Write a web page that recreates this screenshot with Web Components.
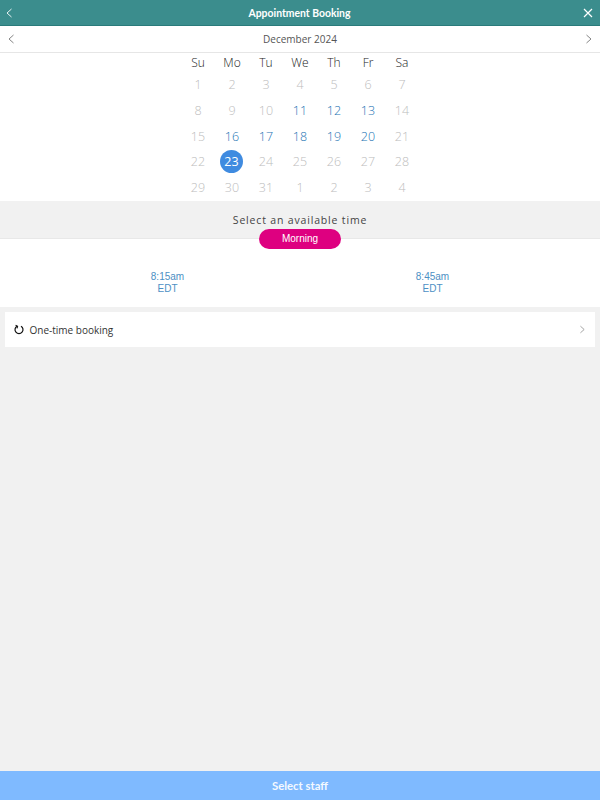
<!DOCTYPE html>
<html lang="en">
<head>
  <meta charset="UTF-8" />
  <title>Appointment Booking</title>
  <style>
    body {
      margin: 0;
      font-family: "Open Sans", "Noto Sans", sans-serif;
      background: #f1f1f1;
      overflow: hidden;
    }
  </style>
</head>
<body>
  <booking-app>
    <title-bar>Appointment Booking</title-bar>
    <month-bar>December 2024</month-bar>
    <month-calendar></month-calendar>
    <time-picker></time-picker>
    <booking-row>One-time booking</booking-row>
    <action-bar>Select staff</action-bar>
  </booking-app>
  <script>
    const chevron = (dir, color, w, h) => `
      <svg width="${w}" height="${h}" viewBox="0 0 6 10" fill="none" stroke="${color}" stroke-width="0.9">
        <path d="${dir === 'left' ? 'M5.5 1 1 5l4.5 4' : 'M.5 1 5 5 .5 9'}" />
      </svg>`;

    class BookingApp extends HTMLElement {
      constructor() {
        super();
        this.attachShadow({ mode: 'open' }).innerHTML = `
          <style>
            :host {
              display: flex;
              flex-direction: column;
              width: 600px;
              height: 800px;
            }
            ::slotted(action-bar) {
              margin-top: auto;
            }
          </style>
          <slot></slot>
        `;
      }
    }
    customElements.define('booking-app', BookingApp);

    class TitleBar extends HTMLElement {
      constructor() {
        super();
        this.attachShadow({ mode: 'open' }).innerHTML = `
          <style>
            :host {
              box-sizing: border-box;
              display: grid;
              grid-template-columns: 1fr auto 1fr;
              align-items: center;
              height: 26px;
              padding: 0 7px 0 6px;
              background: #3b8d8d;
              border-bottom: 1px solid #2a7b7b;
              color: #fff;
              font: 700 10.4px Lato, sans-serif;
            }
            svg { display: block; }
            .close { justify-self: end; }
          </style>
          ${chevron('left', '#fff', 6, 10)}
          <slot></slot>
          <svg class="close" width="10" height="10" viewBox="0 0 10 10" fill="none" stroke="#fff" stroke-width="1.2">
            <path d="M1 1l8 8M9 1 1 9" />
          </svg>
        `;
      }
    }
    customElements.define('title-bar', TitleBar);

    class MonthBar extends HTMLElement {
      constructor() {
        super();
        this.attachShadow({ mode: 'open' }).innerHTML = `
          <style>
            :host {
              box-sizing: border-box;
              display: flex;
              align-items: center;
              justify-content: space-between;
              height: 27px;
              padding: 0 8px;
              background: #fff;
              border-bottom: 1px solid #e6e6e6;
              color: #555;
              font-size: 10px;
            }
            svg { display: block; }
          </style>
          ${chevron('left', '#777', 6, 10)}
          <slot></slot>
          ${chevron('right', '#777', 6, 10)}
        `;
      }
    }
    customElements.define('month-bar', MonthBar);

    class MonthCalendar extends HTMLElement {
      constructor() {
        super();
        const heads = ['Su', 'Mo', 'Tu', 'We', 'Th', 'Fr', 'Sa'];
        const days = [
          1, 2, 3, 4, 5, 6, 7,
          8, 9, 10, 11, 12, 13, 14,
          15, 16, 17, 18, 19, 20, 21,
          22, 23, 24, 25, 26, 27, 28,
          29, 30, 31, 1, 2, 3, 4,
        ];
        const open = new Set([11, 12, 13, 16, 17, 18, 19, 20]);
        const cells = days.map((d, i) => {
          let cls = 'day';
          if (i < 31 && open.has(d)) cls += ' open';
          if (i < 31 && d === 23) cls += ' picked';
          return `<span class="${cls}"><span>${d}</span></span>`;
        }).join('');
        this.attachShadow({ mode: 'open' }).innerHTML = `
          <style>
            :host {
              display: flex;
              justify-content: center;
              height: 148px;
              background: #fff;
            }
            .grid {
              display: grid;
              grid-template-columns: repeat(7, 34px);
              grid-template-rows: 19px repeat(5, 25.7px);
            }
            .head, .day {
              display: flex;
              align-items: center;
              justify-content: center;
              font-weight: 300;
            }
            .head {
              color: #222;
              font-size: 12px;
            }
            .day {
              color: #bdbdbd;
              font-size: 12.5px;
            }
            .open {
              color: #1d74b4;
            }
            .picked span {
              display: flex;
              align-items: center;
              justify-content: center;
              width: 23px;
              height: 23px;
              margin-right: 1px;
              border-radius: 50%;
              background: #3f8be0;
              color: #fff;
              font-weight: 400;
            }
          </style>
          <div class="grid">
            ${heads.map((h) => `<span class="head">${h}</span>`).join('')}
            ${cells}
          </div>
        `;
      }
    }
    customElements.define('month-calendar', MonthCalendar);

    class TimePicker extends HTMLElement {
      constructor() {
        super();
        this.attachShadow({ mode: 'open' }).innerHTML = `
          <style>
            :host {
              display: block;
            }
            .top {
              box-sizing: border-box;
              display: flex;
              justify-content: center;
              align-items: center;
              height: 38px;
              background: #f1f1f1;
              border-bottom: 1px solid #e8e8e8;
              color: #444;
              font-size: 10.5px;
              letter-spacing: 0.83px;
            }
            .body {
              display: flex;
              flex-direction: column;
              align-items: center;
              height: 68px;
              background: #fff;
            }
            .pill {
              position: relative;
              width: 82px;
              height: 20px;
              margin-top: -10px;
              border-radius: 10px;
              background: #de0080;
              color: #fff;
              font: 10px/20px "Liberation Sans", sans-serif;
              text-align: center;
            }
            .slots {
              display: grid;
              grid-template-columns: 265px 265px;
              width: 530px;
              margin-top: 22px;
            }
            .slot {
              color: #4d8fc4;
              font: 10px/12px "Liberation Sans", sans-serif;
              text-align: center;
            }
          </style>
          <div class="top">Select an available time</div>
          <div class="body">
            <div class="pill">Morning</div>
            <div class="slots">
              <div class="slot">8:15am<br />EDT</div>
              <div class="slot">8:45am<br />EDT</div>
            </div>
          </div>
        `;
      }
    }
    customElements.define('time-picker', TimePicker);

    class BookingRow extends HTMLElement {
      constructor() {
        super();
        this.attachShadow({ mode: 'open' }).innerHTML = `
          <style>
            :host {
              box-sizing: border-box;
              display: flex;
              align-items: center;
              gap: 5.5px;
              height: 35px;
              margin: 5px 5px 0;
              padding: 0 10px 0 9px;
              background: #fff;
              color: #333;
              font-size: 10px;
            }
            .arrow {
              margin-left: auto;
            }
            svg { display: block; }
          </style>
          <svg width="10" height="11" viewBox="0 0 10 11" fill="none" stroke="#111" stroke-width="1.2">
            <path d="M3 2.2a4 4 0 1 0 4 0" />
            <path d="M1.6 1.2 3.6 2.2 3 4.4" stroke-width="1.1" />
          </svg>
          <slot></slot>
          <span class="arrow">${chevron('right', '#888', 5, 9)}</span>
        `;
      }
    }
    customElements.define('booking-row', BookingRow);

    class ActionBar extends HTMLElement {
      constructor() {
        super();
        this.attachShadow({ mode: 'open' }).innerHTML = `
          <style>
            :host {
              display: flex;
              align-items: center;
              justify-content: center;
              height: 29px;
              background: #7fbaff;
              color: #f4f9ff;
              font: 700 11.3px Lato, sans-serif;
            }
          </style>
          <slot></slot>
        `;
      }
    }
    customElements.define('action-bar', ActionBar);
  </script>
</body>
</html>
